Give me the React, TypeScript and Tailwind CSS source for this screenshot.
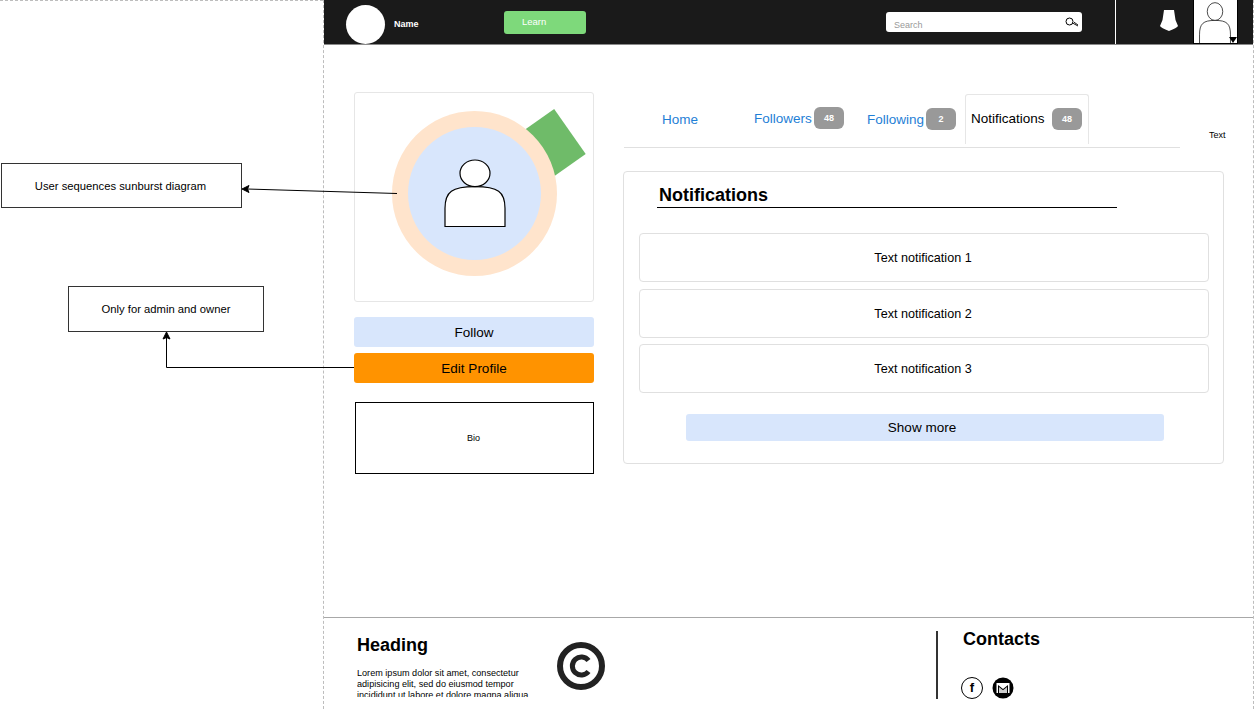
import React from 'react';

function PersonIcon({ className }: { className?: string }) {
  return (
    <svg viewBox="0 0 62 70" preserveAspectRatio="none" className={className} fill="white" stroke="black" strokeWidth="1.2">
      <path d="M1 68.5 V50 C1 33 8 28 31 28 C54 28 61 33 61 50 V68.5 Z" />
      <ellipse cx="31" cy="14.5" rx="15" ry="13.5" />
    </svg>
  );
}

function Badge({ value }: { value: string }) {
  return (
    <span className="flex h-[22px] w-[30px] items-center justify-center rounded-[6px] bg-[#999999] pt-[2px] text-[9px] font-bold text-white">
      {value}
    </span>
  );
}

function Header() {
  return (
    <header className="flex h-[45px] items-stretch border-b border-[#8a8a8a] bg-[#1a1a1a]">
      <div className="ml-[22px] mt-[5px] h-[39px] w-[39px] rounded-full bg-white" />
      <span className="ml-[9px] mt-[18px] w-[25px] text-[9px] leading-[12px] font-bold text-white">Name</span>
      <button className="ml-[85px] mt-[11px] flex h-[23px] w-[82px] items-center rounded-[3px] bg-[#7ed97b] pl-[18px] text-[9.5px] text-white">
        Learn
      </button>
      <div className="ml-[300px] mt-[12px] flex h-[20px] w-[196px] items-center justify-between rounded-[3px] bg-white pl-[8px] pr-[3px]">
        <span className="mt-[7px] text-[9px] text-[#999999]">Search</span>
        <svg viewBox="0 0 14 10" className="h-[10px] w-[14px]" fill="none" stroke="black">
          <circle cx="4.5" cy="4.5" r="3.5" />
          <path d="M7.5 6 L13 9 M9 5.2 L13 8" strokeWidth="0.9" />
        </svg>
      </div>
      <div className="ml-[33px] w-px bg-white" />
      <svg viewBox="0 0 18 21" className="ml-[44px] mt-[10px] h-[21px] w-[18px]" fill="white">
        <path d="M4 0 H14 L15.5 10 L18 16 Q17 18 9 21 Q1 18 0 16 L2.5 10 Z" />
      </svg>
      <div className="relative ml-[15px] h-[44px] w-[45px] overflow-hidden border-x border-b border-black bg-white">
        <PersonIcon className="absolute left-[5px] top-[2px] h-[46px] w-[32px]" />
        <div className="absolute bottom-0 right-0 h-0 w-0 border-x-[4px] border-t-[6px] border-x-transparent border-t-black" />
      </div>
    </header>
  );
}

function ProfileColumn() {
  return (
    <div className="flex w-[240px] flex-col">
      <div className="relative h-[210px] rounded-[3px] border border-[#e6e6e6]">
        <div className="absolute left-[174px] top-[24px] h-[55px] w-[45px] -rotate-[35deg] bg-[#6fbb69]" />
        <div className="absolute left-[37px] top-[18px] flex h-[165px] w-[165px] items-center justify-center rounded-full bg-[#ffe4cc]">
          <div className="flex h-[133px] w-[133px] items-center justify-center rounded-full bg-[#d8e6fc]">
            <PersonIcon className="h-[69px] w-[62px]" />
          </div>
        </div>
      </div>
      <button className="mt-[15px] h-[30px] rounded-[3px] bg-[#d8e6fc] pt-[2px] text-[13.5px] text-black">Follow</button>
      <button className="mt-[6px] h-[30px] rounded-[3px] bg-[#ff9300] pt-[2px] text-[13.5px] text-black">Edit Profile</button>
      <div className="ml-px mt-[19px] flex h-[72px] items-center justify-center border border-black pt-[2px] pr-[2px] text-[9px] text-black">
        Bio
      </div>
    </div>
  );
}

function Tabs() {
  return (
    <div className="flex items-start">
      <div className="flex h-[56px] w-[556px] items-start border-b border-[#e0e0e0]">
        <span className="ml-[38px] mt-[19px] w-[36px] text-[13.5px] leading-[17px] text-[#1f7fd6]">Home</span>
        <span className="ml-[56px] mt-[18px] w-[57px] text-[13.5px] leading-[17px] text-[#1f7fd6]">Followers</span>
        <span className="ml-[3px] mt-[15px]">
          <Badge value="48" />
        </span>
        <span className="ml-[23px] mt-[19px] w-[56px] text-[13.5px] leading-[17px] text-[#1f7fd6]">Following</span>
        <span className="ml-[3px] mt-[16px]">
          <Badge value="2" />
        </span>
        <div className="ml-[9px] mt-[2px] flex h-[50px] w-[124px] items-start rounded-t-[3px] border-x border-t border-[#e6e6e6] bg-white">
          <span className="ml-[5px] mt-[15px] w-[76px] text-[13.5px] leading-[17px] text-black">Notifications</span>
          <span className="ml-[5px] mt-[13px]">
            <Badge value="48" />
          </span>
        </div>
      </div>
      <span className="ml-[29px] mt-[37px] text-[9px] leading-[12px] text-black">Text</span>
    </div>
  );
}

function NotificationRow({ text }: { text: string }) {
  return (
    <div className="flex h-[49px] items-center justify-center rounded-[4px] border border-[#e0e0e0] pt-[2px] pr-[2px] text-[12.6px] text-black last:mt-[-1px]">
      {text}
    </div>
  );
}

function NotificationsPanel() {
  return (
    <section className="ml-[-1px] mt-[23px] h-[293px] w-[601px] rounded-[4px] border border-[#e0e0e0] pl-[15px] pr-[14px]">
      <h2 className="ml-[18px] mr-[92px] border-b border-black pl-[2px] pt-[12px] text-[18px] leading-[23px] font-bold text-black">
        Notifications
      </h2>
      <div className="mt-[25px] flex flex-col gap-[7px]">
        <NotificationRow text="Text notification 1" />
        <NotificationRow text="Text notification 2" />
        <NotificationRow text="Text notification 3" />
      </div>
      <button className="ml-[47px] mt-[21px] h-[27px] w-[478px] rounded-[3px] bg-[#d8e6fc] pr-[6px] pt-[2px] text-[13.5px] text-black">
        Show more
      </button>
    </section>
  );
}

function Footer() {
  return (
    <footer className="flex h-[92px] items-start overflow-hidden border-t border-[#a8a8a8]">
      <div className="ml-[33px] w-[180px]">
        <h3 className="mt-[16px] text-[18px] leading-[22px] font-bold text-black">Heading</h3>
        <p className="mt-[12px] h-[29px] overflow-hidden text-[9.1px] leading-[11px] text-black">
          Lorem ipsum dolor sit amet, consectetur adipisicing elit, sed do eiusmod tempor incididunt ut labore et dolore magna aliqua.
        </p>
      </div>
      <svg viewBox="0 0 48 48" className="ml-[20px] mt-[24px] h-[48px] w-[48px]" fill="none" stroke="#222222">
        <circle cx="24" cy="24" r="21" strokeWidth="6" />
        <path d="M31.5 18.5 A9 9 0 1 0 31.5 29.5" strokeWidth="5" />
      </svg>
      <div className="ml-[331px] mt-[13px] h-[68px] w-[2px] bg-[#333333]" />
      <div className="ml-[23px]">
        <h3 className="ml-[2px] mt-[11px] text-[18px] leading-[21px] font-bold text-black">Contacts</h3>
        <div className="mt-[27px] flex gap-[9px]">
          <div className="flex h-[22px] w-[22px] items-center justify-center rounded-full border border-black text-[13px] font-bold text-black">
            f
          </div>
          <svg viewBox="0 0 22 22" className="h-[22px] w-[22px]">
            <circle cx="11" cy="11" r="10.5" fill="black" />
            <rect x="4.5" y="6" width="13" height="10" fill="white" />
            <path d="M6 16 V8 L11 12 L16 8 V16 Z" fill="black" />
            <path d="M7 16 V10 L11 13.2 L15 10 V16 Z" fill="#cccccc" />
          </svg>
        </div>
      </div>
    </footer>
  );
}

export default function App() {
  return (
    <div className="relative flex h-[709px] w-[1255px] overflow-hidden bg-white font-['Liberation_Sans',Arial,sans-serif]">
      <aside className="relative w-[323px] shrink-0 border-t border-dashed border-[#bdbdbd]">
        <div className="absolute left-[1px] top-[162px] flex h-[45px] w-[241px] items-center justify-center border border-[#333333] pt-[2px] pr-[2px] text-[11.25px] text-black">
          User sequences sunburst diagram
        </div>
        <div className="absolute left-[68px] top-[285px] flex h-[46px] w-[196px] items-center justify-center border border-[#333333] text-[11.25px] text-black">
          Only for admin and owner
        </div>
      </aside>
      <main className="flex w-[931px] flex-col border-x border-dashed border-[#bdbdbd]">
        <Header />
        <div className="flex h-[572px] items-start pl-[30px] pt-[47px]">
          <ProfileColumn />
          <div className="ml-[30px] flex flex-col">
            <Tabs />
            <NotificationsPanel />
          </div>
        </div>
        <Footer />
      </main>
      {/* connectors between the notes and the page */}
      <svg className="pointer-events-none absolute left-0 top-0 h-[709px] w-[1255px]" fill="none" stroke="black">
        <path d="M397 193.5 L247 189" />
        <path d="M242 189 L249 185.5 L247.5 189 L249 192.5 Z" fill="black" />
        <path d="M354 367.5 H166.5 V337" />
        <path d="M166.5 332 L170 339 L166.5 337.5 L163 339 Z" fill="black" />
      </svg>
    </div>
  );
}
